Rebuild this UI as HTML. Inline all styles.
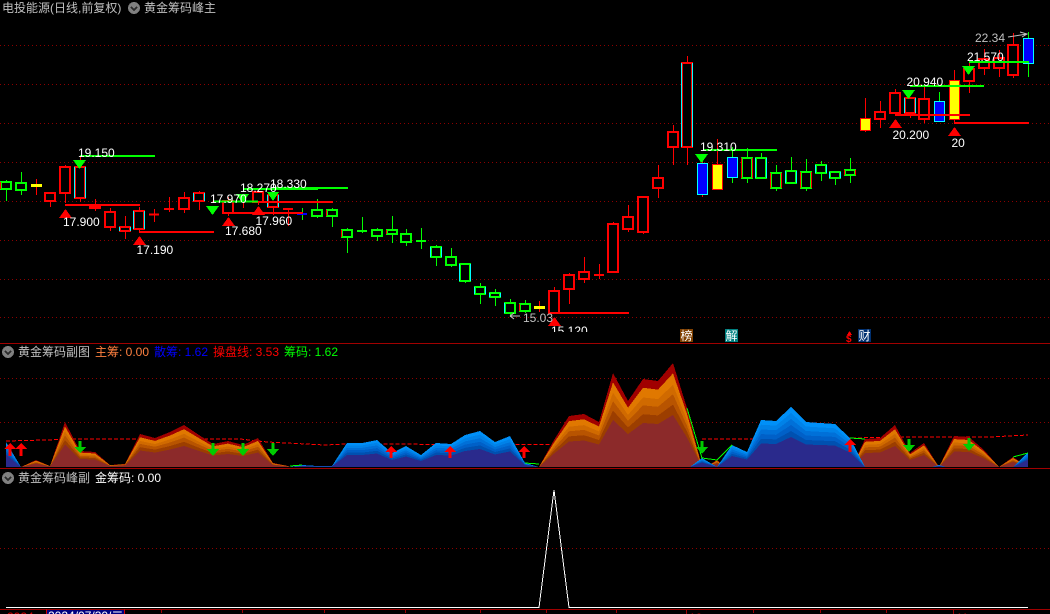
<!DOCTYPE html>
<html>
<head>
<meta charset="utf-8">
<style>
html,body{margin:0;padding:0;background:#000;width:1050px;height:614px;overflow:hidden}
svg{display:block;position:absolute;left:0;top:0}
text{font-family:"Liberation Sans","WenQuanYi Zen Hei","Noto Sans CJK SC",sans-serif;font-size:12px}
.s{shape-rendering:crispEdges}
.w{fill:#fff}.g{fill:#c0c0c0}
</style>
</head>
<body>
<svg width="1050" height="614" viewBox="0 0 1050 614">
<defs>
<path id="wa" d="M21 467L36 460L50 466L65 422L80 451L95 452L110 465L125 464L140 434L155 438L170 432L184 425L199 435L213 444L228 441L243 445L258 438L273 463L288 466L290 467ZM539 467L554 440L569 416L584 414L599 422L613 373L628 401L643 379L658 381L673 363L687 408L702 467L706 467L717 460L725 467ZM852 467L865 439L880 438L895 425L910 453L924 443L939 467L954 436L969 437L984 450L999 467L1013 457L1028 467Z"/>
<path id="bl" d="M6 467V442L21 467ZM290 467L302 465L317 466L332 466L347 443L362 443L377 440L392 453L406 446L421 455L436 443L451 444L465 435L480 431L495 442L510 436L525 463L539 467ZM690 467L702 458L717 467L732 445L747 452L761 420L776 421L791 407L806 422L820 423L835 424L850 438L865 467ZM932 467L939 465L946 467ZM1013 467L1028 452V467Z"/>
</defs>
<g class="s">
<!-- grid -->
<path stroke="#8c0000" stroke-width="1" stroke-dasharray="1 3" fill="none" d="M0 45.500H1050M0 84.500H1050M0 123.500H1050M0 162.500H1050M0 201.500H1050M0 240.500H1050M0 279.500H1050M0 317.500H1050M0 378.500H1050M0 422.500H1050M0 548.500H1050"/>
<!-- red wicks -->
<path stroke="#f00" fill="none" d="M36.500 179V195M50.500 193V207M65.500 165V203M80.500 157V202M95.500 199V211M110.500 208V231M125.500 216V239M139.500 207V233M154.500 209V222M169.500 197V212M184.500 192V213M199.500 191V210M228.500 197V216M243.500 200V208M258.500 190V205M273.500 192V215M288.500 208V226M539.500 301V312M554.500 287V313M569.500 273V304M584.500 257V283M599.500 264V279M613.500 222V272M628.500 205V232M643.500 196V234M658.500 165V198M673.500 125V165M687.500 56V165M702.500 160V197M717.500 139V189M865.500 98V132M880.500 101V128M895.500 89V113M910.500 98V118M924.500 87V123M954.500 70V123M969.500 62V93M984.500 49V75M999.500 50V77M1013.500 33V78"/>
<!-- green wicks -->
<path stroke="#0f0" fill="none" d="M6.500 180V201M21.500 172V195M302.500 208V220M317.500 199V218M332.500 208V227M347.500 228V253M362.500 217V233M377.500 228V241M392.500 216V243M406.500 229V246M421.500 228V249M436.500 245V266M451.500 248V267M465.500 264V283M480.500 283V304M495.500 289V306M510.500 299V317M525.500 300V313M732.500 147V183M747.500 148V183M761.500 153V178M776.500 165V191M791.500 157V183M806.500 159V191M821.500 161V181M835.500 172V185M850.500 158V183M939.500 92V121M1028.500 32V77"/>
<!-- red bodies -->
<path stroke="#f00" stroke-width="2" fill="#000" d="M45 193h10v8h-10zM60 167h10v26h-10zM75 167h10v31h-10zM90 206h10v2h-10zM105 212h10v15h-10zM120 227h10v4h-10zM134 211h10v18h-10zM179 198h10v11h-10zM194 193h10v8h-10zM223 201h10v12h-10zM253 192h10v10h-10zM268 195h10v12h-10zM549 291h10v22h-10zM564 275h10v14h-10zM579 272h10v7h-10zM608 224h10v48h-10zM623 217h10v12h-10zM638 197h10v35h-10zM653 178h10v10h-10zM668 132h10v15h-10zM682 63h10v84h-10zM875 112h10v7h-10zM890 93h10v20h-10zM905 98h10v15h-10zM919 99h10v20h-10zM964 69h10v12h-10zM979 59h10v9h-10zM994 58h10v10h-10zM1008 45h10v30h-10z"/>
<path stroke="#f00" stroke-width="2" fill="none" d="M149 214.500h10M164 209h10M283 209h10M594 275h10"/>
<!-- cyan edges -->
<path stroke="#0ff" stroke-width="1" fill="none" d="M74.500 167V198M85.500 167V198M119.500 227V231M130.500 227V231M133.500 211V229M144.500 211V229M267.500 195V207M278.500 195V207M681.500 63V147M692.500 63V147M904.500 98V113M915.500 98V113M193.500 193V201M204.500 193V201"/>
<!-- green bodies -->
<path stroke="#0f0" stroke-width="2" fill="#000" d="M1 182h10v7h-10zM16 183h10v7h-10zM312 210h10v6h-10zM327 210h10v6h-10zM342 230h10v7h-10zM372 230h10v6h-10zM387 230h10v4h-10zM401 234h10v8h-10zM431 247h10v10h-10zM446 257h10v8h-10zM460 264h10v17h-10zM475 287h10v7h-10zM490 293h10v4h-10zM505 303h10v10h-10zM520 304h10v7h-10zM742 158h10v20h-10zM756 158h10v20h-10zM771 173h10v15h-10zM786 171h10v12h-10zM801 172h10v16h-10zM816 165h10v8h-10zM830 172h10v6h-10zM845 170h10v5h-10z"/>
<path stroke="#0f0" stroke-width="2" fill="none" d="M357 231h10M416 241h10"/>
<path stroke="#0ff" stroke-width="1" fill="none" d="M430.500 247V257M441.500 247V257M459.500 264V281M470.500 264V281M474.500 287V294M485.500 287V294M489.500 293V297M500.500 293V297M504.500 303V313M755.500 158V178M766.500 158V178M785.500 171V183M796.500 171V183M815.500 165V173M826.500 165V173M829.500 172V178M840.500 172V178"/>
<path stroke="#f00" stroke-width="1" fill="none" d="M0.500 182V189M326.500 210V216M341.500 230V237M386.500 230V234M741.500 158V178M752.500 158V178M770.500 173V188M781.500 173V188M800.500 172V188M811.500 172V188M844.500 170V175M855.500 170V175M519.500 304V311"/>
<!-- yellow -->
<path fill="#ff0" stroke="#f00" d="M712.500 164.500h10v25h-10zM860.500 118.500h10v12h-10zM949.500 80.500h10v39h-10z"/>
<path fill="#ff0" d="M31 184h11v3H31zM534 306h11v3h-11z"/>
<!-- blue -->
<path fill="#00f" stroke="#0ff" d="M697.500 163.500h10v31h-10zM727.500 157.500h10v20h-10zM934.500 101.500h10v20h-10zM1023.500 38.500h10v25h-10z"/>
<path fill="#00f" d="M297 213h10v2h-10z"/>
<!-- level lines -->
<path stroke="#0f0" stroke-width="2" fill="none" d="M80 156H155M213 201.500H258M243 189H318M273 188H348M703 150H777M910 86H984M969 62H1029"/>
<path stroke="#f00" stroke-width="2" fill="none" d="M65 205H140M139 232H214M228 213H303M258 202H333M554 313H629M895 115H970M954 123H1029"/>
<!-- triangles -->
<path fill="#f00" d="M59 218L65.500 209L72 218ZM133 245L139.500 236L146 245ZM222 226L228.500 217L235 226ZM252 215L258.500 206L265 215ZM548 326L554.500 317L561 326ZM889 128L895.500 119L902 128ZM948 136L954.500 127L961 136Z"/>
<path fill="#0f0" d="M73 160L79.500 169L86 160ZM206 206L212.500 215L219 206ZM236 194L242.500 203L249 194ZM267 192L273 201L279 192ZM695 154L701.500 163L708 154ZM902 90L908.500 99L915 90ZM962 66L968.500 75L975 66Z"/>
<!-- separators -->
<path stroke="#a00000" stroke-width="1" fill="none" d="M0 343.500H1050M0 468.500H1050M0 609.500H1050"/>
<!-- dashed -->
<path stroke="#f00" stroke-width="1" stroke-dasharray="4 2" fill="none" d="M6 441L83 439L240 439L267 442L325 445L347 444L625 445M702 439L750 439L850 438L900 437L990 437L1028 435"/>
<!-- warm areas -->
<use href="#wa" fill="#a00000"/>
<use href="#wa" fill="#e07800" transform="translate(0 46.700) scale(1 .9)"/>
<use href="#wa" fill="#d06a00" transform="translate(0 98.070) scale(1 .79)"/>
<use href="#wa" fill="#b85400" transform="translate(0 140.100) scale(1 .7)"/>
<use href="#wa" fill="#9c3e00" transform="translate(0 186.800) scale(1 .6)"/>
<use href="#wa" fill="#8c2a2a" transform="translate(0 233.500) scale(1 .5)"/>
<!-- blue areas -->
<use href="#bl" fill="#0090f8"/>
<use href="#bl" fill="#0082e8" transform="translate(0 46.700) scale(1 .9)"/>
<use href="#bl" fill="#0070d8" transform="translate(0 93.400) scale(1 .8)"/>
<use href="#bl" fill="#0060c8" transform="translate(0 140.100) scale(1 .7)"/>
<use href="#bl" fill="#0050b0" transform="translate(0 186.800) scale(1 .6)"/>
<use href="#bl" fill="#2a2a8c" transform="translate(0 233.500) scale(1 .5)"/>
<path stroke="#0f0" stroke-width="1" fill="none" d="M687 408L702 458L717 460L732 445M850 438L865 439M525 463L539 464M1013 457L1028 453M290 466L302 465"/>
<!-- sub arrows -->
<path fill="#f00" d="M4 449L10 443L16 449H11.500V456H8.500V449ZM15 449L21 443L27 449H22.500V456H19.500V449ZM385 452L391 446L397 452H392.500V458H389.500V452ZM444 452L450 446L456 452H451.500V458H448.500V452ZM518 452L524 446L530 452H525.500V458H522.500V452ZM844 445L850 439L856 445H851.500V452H848.500V445Z"/>
<path fill="#0c0" d="M74 447L80 453L86 447H81.500V441H78.500V447ZM207 449L213 456L219 449H214.500V443H211.500V449ZM237 449L243 456L249 449H244.500V443H241.500V449ZM267 449L273 456L279 449H274.500V443H271.500V449ZM696 447L702 454L708 447H703.500V441H700.500V447ZM903 445L909 452L915 445H910.500V439H907.500V445ZM963 444L969 451L975 444H970.500V438H967.500V444Z"/>
<!-- bottom line -->
<path stroke="#fff" stroke-width="1" fill="none" d="M6 607.500H539L554 490L569 607.500H1028"/>
<!-- ticks -->
<path stroke="#a00000" fill="none" d="M161.500 609V613M242.500 609V613M324.500 609V613M405.500 609V613M480.500 609V613M546.500 609V613M616.500 609V613M686.500 609V614M753.500 609V613M820.500 609V613M886.500 609V613M953.500 609V614"/>
<!-- date box -->
<rect x="47" y="610" width="77" height="4" fill="#000080"/>
<path stroke="#d00000" fill="none" d="M46.500 609V614M124.500 609V614"/>
<!-- markers -->
<rect x="680" y="329" width="13" height="13" fill="#804000"/>
<rect x="725" y="329" width="13" height="13" fill="#008080"/>
<rect x="858" y="329" width="13" height="13" fill="#003070"/>
<path fill="#f00" d="M847 335L849.500 331L852 335Z"/>
<!-- icons -->
<circle cx="134" cy="8" r="6" fill="#808080"/>
<circle cx="8" cy="352" r="6" fill="#808080"/>
<circle cx="8" cy="478" r="6" fill="#808080"/>
<path stroke="#2a2a2a" stroke-width="1.500" fill="none" d="M131 7L134 10L137 7M5 351L8 354L11 351M5 477L8 480L11 477"/>
</g>
<path stroke="#c0c0c0" fill="none" d="M510 316H520M510 316L514 313M510 316L514 319M1008 37L1027 34M1020 32L1027 34L1022 37"/>
<!-- header text -->
<text x="2" y="12" class="g">电投能源(日线,前复权)</text>
<text x="144" y="12" class="g">黄金筹码峰主</text>
<text x="18" y="356" class="g">黄金筹码副图</text>
<text x="95" y="356" fill="#ff8040">主筹: 0.00</text>
<text x="154" y="356" fill="#0000ff">散筹: 1.62</text>
<text x="213" y="356" fill="#ff0000">操盘线: 3.53</text>
<text x="284" y="356" fill="#00ff00">筹码: 1.62</text>
<text x="18" y="482" class="g">黄金筹码峰副</text>
<text x="95" y="482" class="w">金筹码: 0.00</text>
<!-- price labels -->
<text x="78" y="157" class="w">19.150</text>
<text x="63" y="226" class="w">17.900</text>
<text x="136.500" y="254" class="w">17.190</text>
<text x="210" y="203" class="w">17.970</text>
<text x="225" y="235" class="w">17.680</text>
<text x="240" y="192" class="w">18.270</text>
<text x="255.500" y="225" class="w">17.960</text>
<text x="270" y="188" class="w">18.330</text>
<text x="523" y="322" class="g">15.03</text>
<svg x="540" y="320" width="100" height="12" viewBox="540 320 100 12"><text x="551" y="335" class="w">15.120</text></svg>
<text x="700" y="151" class="w">19.310</text>
<text x="892.500" y="139" class="w">20.200</text>
<text x="906.500" y="86" class="w">20.940</text>
<text x="951.500" y="147" class="w">20</text>
<text x="967" y="61" class="w">21.570</text>
<text x="975" y="42" class="g">22.34</text>
<!-- marker text -->
<text x="680.500" y="340" class="w">榜</text>
<text x="725.500" y="340" class="w">解</text>
<text x="858.500" y="340" class="w">财</text>
<text x="846" y="342" fill="#f00" style="font-size:10px;font-weight:bold">$</text>
<!-- axis text -->
<text x="7" y="621" fill="#e00000">2024</text>
<text x="48" y="620" class="w">2024/07/30/二</text>
<text x="689" y="622" fill="#e00000">10</text>
<text x="956" y="622" fill="#e00000">11</text>
</svg>
</body>
</html>
